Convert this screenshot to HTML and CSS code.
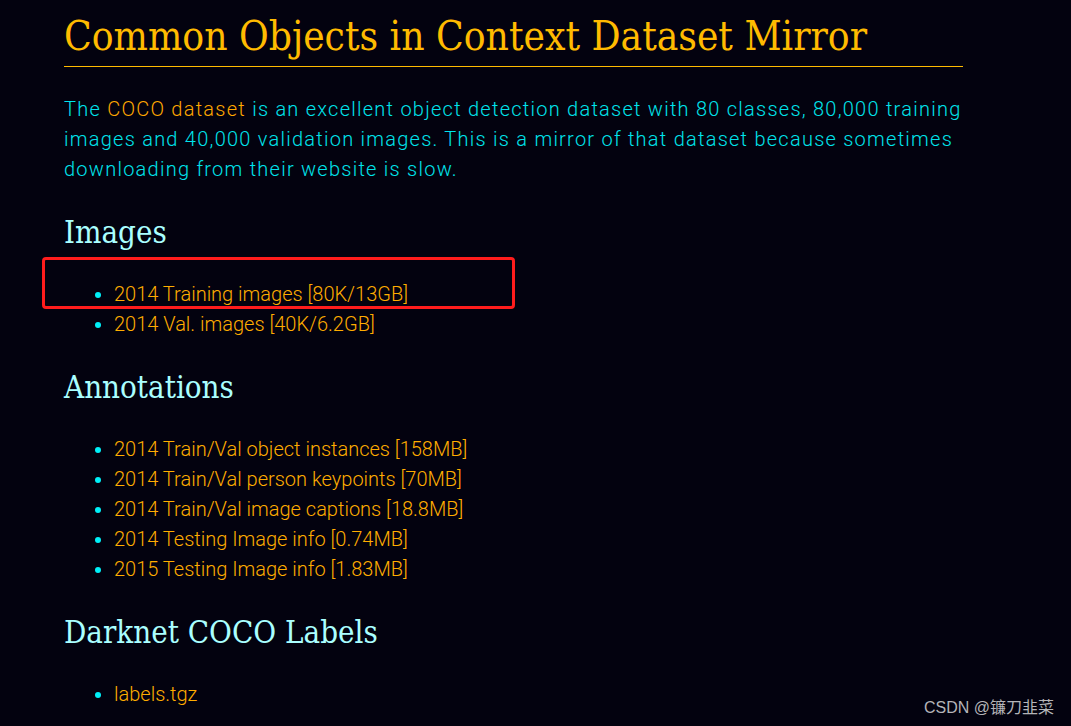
FILE: index.html
```html
<!DOCTYPE html>
<html>
<head>
<meta charset="utf-8">
<title>COCO Dataset Mirror</title>
<link rel="stylesheet" href="styles.css">
</head>
<body>
<main class="page">
  <h1 class="title">Common Objects in Context Dataset Mirror</h1>
  <p class="intro">The <a class="link" href="#">COCO dataset</a> is an excellent object detection dataset with 80 classes, 80,000 training images and 40,000 validation images. This is a mirror of that dataset because sometimes downloading from their website is slow.</p>

  <h2 class="section">Images</h2>
  <ul class="files">
    <li><a class="link" href="#">2014 Training images [80K/13GB]</a></li>
    <li><a class="link" href="#">2014 Val. images [40K/6.2GB]</a></li>
  </ul>

  <h2 class="section">Annotations</h2>
  <ul class="files">
    <li><a class="link" href="#">2014 Train/Val object instances [158MB]</a></li>
    <li><a class="link" href="#">2014 Train/Val person keypoints [70MB]</a></li>
    <li><a class="link" href="#">2014 Train/Val image captions [18.8MB]</a></li>
    <li><a class="link" href="#">2014 Testing Image info [0.74MB]</a></li>
    <li><a class="link" href="#">2015 Testing Image info [1.83MB]</a></li>
  </ul>

  <h2 class="section">Darknet COCO Labels</h2>
  <ul class="files">
    <li><a class="link" href="#">labels.tgz</a></li>
  </ul>
</main>
<div class="highlight"></div>
<div class="watermark">CSDN @镰刀韭菜</div>
</body>
</html>
```

FILE: styles.css
```css
html, body {
  margin: 0;
  padding: 0;
  background: #03020f;
}
body {
  width: 1071px;
  height: 726px;
  overflow: hidden;
  position: relative;
  font-family: Roboto, "Liberation Sans", sans-serif;
}
.page {
  width: 899px;
  padding-left: 64px;
}
.title {
  margin: 0;
  padding: 13px 0 5px;
  line-height: 48px;
  font-family: "DejaVu Serif Condensed", "DejaVu Serif", serif;
  font-stretch: condensed;
  font-weight: normal;
  font-size: 40.3px;
  color: #ffbb00;
  border-bottom: 1px solid #ffbb00;
}
.intro {
  margin: 27px 0 0;
  font-size: 20px;
  line-height: 30px;
  letter-spacing: 1.25px;
  font-weight: 300;
  color: #00e4ec;
}
.intro .link {
  color: #ffa800;
}
.link {
  color: #ffad00;
  text-decoration: none;
}
.section {
  margin: 28px 0 27px;
  line-height: 40px;
  font-family: "DejaVu Serif Condensed", "DejaVu Serif", serif;
  font-stretch: condensed;
  font-weight: normal;
  font-size: 31px;
  color: #aaffff;
}
.files {
  margin: 0;
  padding-left: 50px;
  list-style: disc;
}
.files li {
  font-size: 20px;
  line-height: 30px;
  font-weight: 300;
  color: #00e0e6;
}
.files li::marker {
  color: #00f0f8;
}
.highlight {
  position: absolute;
  left: 42px;
  top: 257px;
  width: 467px;
  height: 46px;
  border: 3px solid #ff1c1c;
  border-radius: 4px;
}
.watermark {
  position: absolute;
  right: 17px;
  bottom: 8px;
  font-family: "Liberation Sans", "Noto Sans CJK SC", sans-serif;
  font-size: 16px;
  color: #b4b4b8;
}
```
